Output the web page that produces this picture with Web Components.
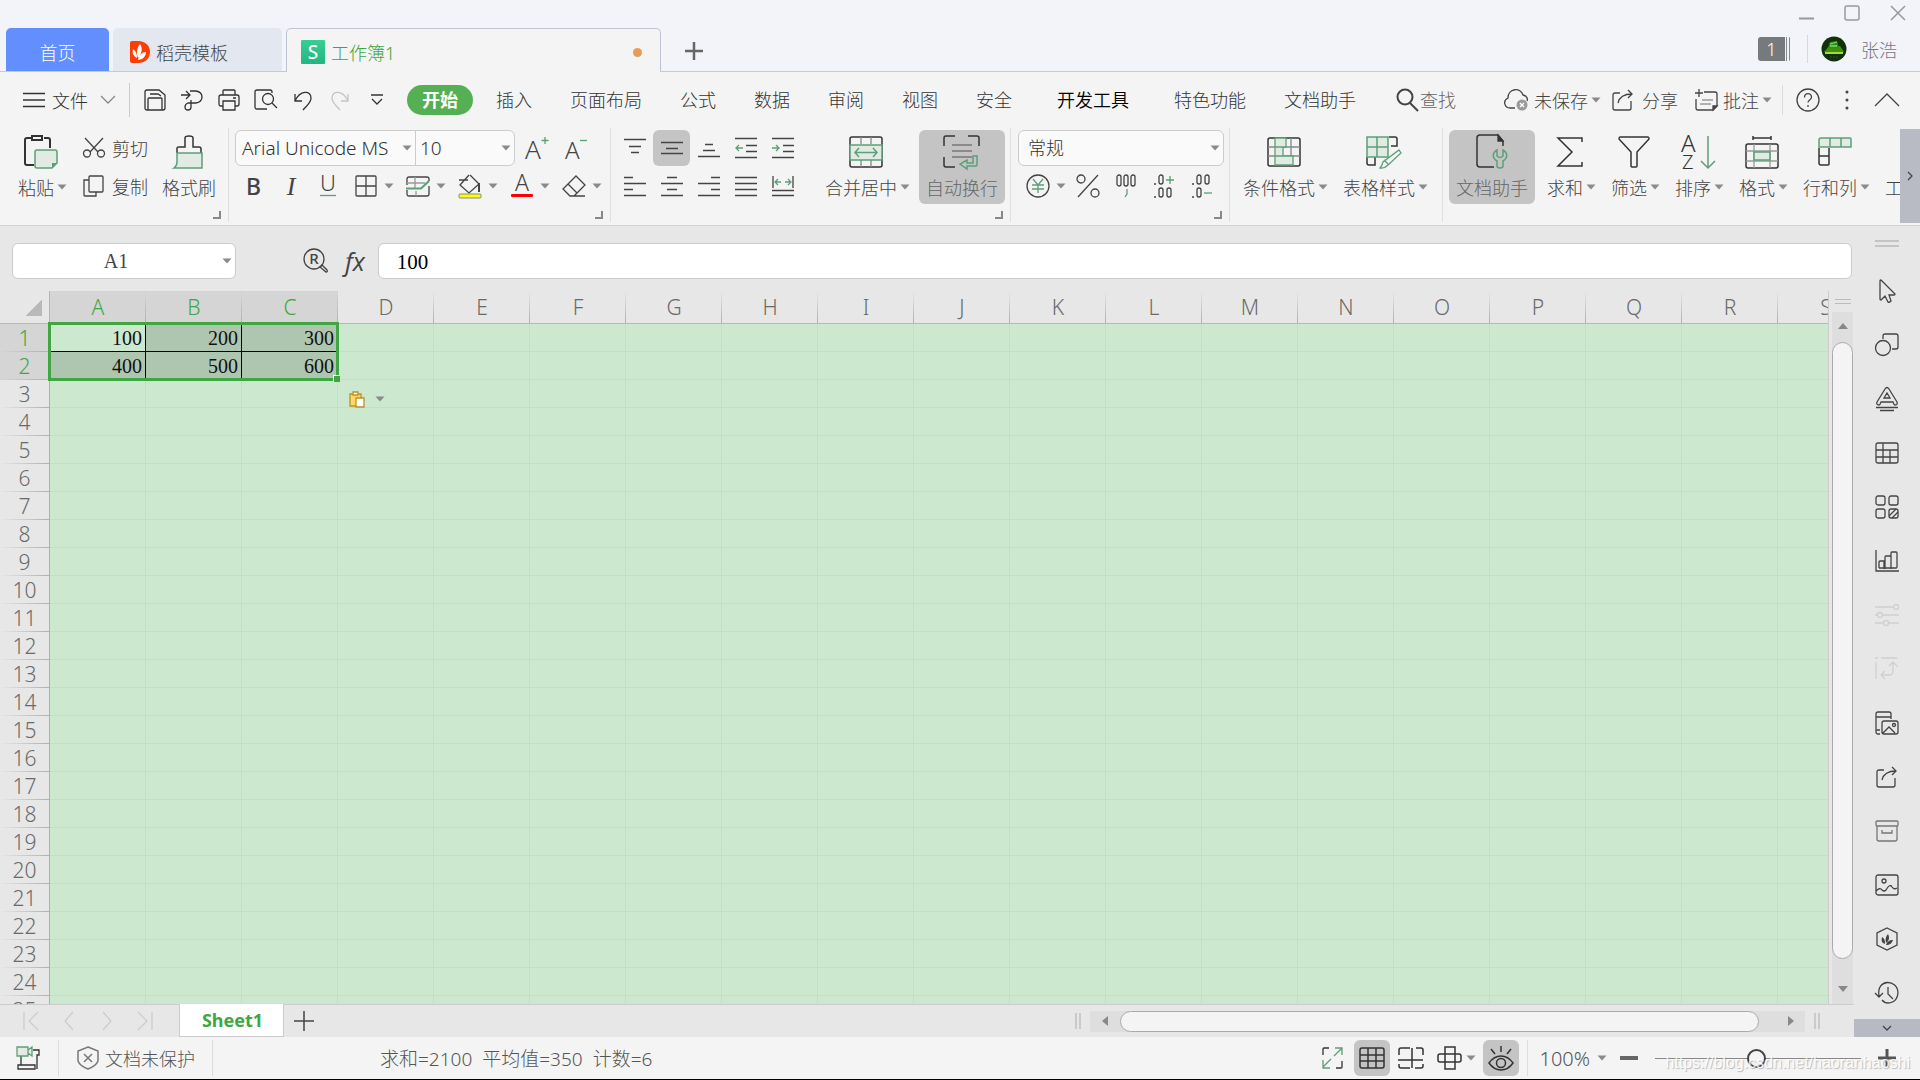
<!DOCTYPE html>
<html lang="zh-CN">
<head>
<meta charset="utf-8">
<title>工作簿1</title>
<style>
  html, body { margin: 0; height: 100%; }
  body {
    font-family: "Noto Sans", "Noto Sans CJK SC", sans-serif;
    font-size: 18px;
    font-weight: 300;
    color: #444;
    overflow: hidden;
    --green: #5d9f78;
    --accent: #3fa642;
    --pressed: #c4c4c4;
    --panel: #f4f4f4;
    --bar: #e7e7e7;
  }
</style>
</head>
<body>
<app-window></app-window>
<script>
const G = 'stroke="#5d9f78"';
const GF = 'stroke="#5d9f78" fill="#e1ebe4"';
const lines = d => `<path d="${d}"/>`;
const letter = (ch, x, y, size, extra = '') => `<text x="${x}" y="${y}" font-size="${size}" fill="currentColor" stroke="none" ${extra}>${ch}</text>`;

/* 图标: [宽, 高, 内容] */
const ICONS = {
  arrow: [16, 8, '<path d="M3.500 1.500h9l-4.500 5z" fill="#8a8a8a" stroke="none"/>'],
  min: [16, 16, '<path d="M1 13.500h15" stroke="#999" stroke-width="2"/>'],
  max: [16, 16, '<rect x="1" y="1" width="14" height="14" rx="2" stroke="#999" stroke-width="1.500"/>'],
  close: [16, 16, '<path d="M1 1l14 14M15 1L1 15" stroke="#999" stroke-width="1.500"/>'],
  plusTab: [18, 18, '<path d="M9 0v18M0 9h18" stroke="#666" stroke-width="2.500"/>'],
  flame: [20, 24, '<path d="M2 1h6c16 0 16 22 0 22H2q-2 0-2-2V3q0-2 2-2z" fill="#fe3d04" stroke="none"/><path d="M8 18C6 12 7 8 10 4c3 4 2 9-2 14zM7 18C3 16 2 13 3 9c3 2 4 5 4 9zM8 20c1-5 4-8 8-8 0 4-3 8-8 8z" fill="#fff" stroke="none"/>'],
  sheetLogo: [24, 24, '<defs><linearGradient id="g" x2="0" y2="1"><stop stop-color="#37cf96"/><stop offset="1" stop-color="#25b580"/></linearGradient></defs><rect width="24" height="24" rx="1" fill="url(#g)" stroke="none"/>' + letter('S', 12, 19, 19, 'style="fill:#fff" text-anchor="middle" font-weight="500"')],
  avatar: [26, 26, '<circle cx="13" cy="13" r="12.500" fill="#12300a" stroke="none"/><path d="M3 16h20l-4-6H8z" fill="#3f8f10" stroke="none"/><path d="M4 17h18" stroke="#9ee31c" stroke-width="2"/><path d="M9 6l7-1 2 7H7z" fill="#268c28" stroke="none"/><path d="M9 8l7-2M9 10h7" stroke="#7be04a"/><path d="M9 21h8" stroke="#243" stroke-dasharray="2 1"/>'],
  burger: [22, 16, lines('M0 1.500h22M0 8h22M0 14.500h22')],
  chevDown: [16, 10, '<path d="M1 1l7 7 7-7" stroke="#888"/>'],
  chevUp: [26, 14, lines('M1 13L13 1l12 12')],
  chevRight: [6, 10, lines('M1 1l4 4-4 4')],
  chevSmall: [10, 6, lines('M1 1l4 4 4-4')],
  save: [22, 22, lines('M3 1h12l6 5v13q0 2-2 2H3q-2 0-2-2V3q0-2 2-2zM4 21V10q0-1 1-1h12q1 0 1 1v11M6 5h8l3 2')],
  export: [22, 22, lines('M0 6h9M5 2l4 4-4 4M9 2h6q6 1 6 6t-6 6H9M10 11v7q0 3-3 3t-3-3 3-4h3')],
  print: [22, 22, lines('M5 6V2q0-1 1-1h10q1 0 1 1v4M5 17H3q-2 0-2-2V8q0-2 2-2h16q2 0 2 2v7q0 2-2 2h-2M5 12h12v9H5zM15 9h3')],
  preview: [24, 22, lines('M13 20H3q-2 0-2-2V3q0-2 2-2h13q2 0 2 2v1M18 14l5 5') + '<circle cx="14" cy="10" r="5.500"/>'],
  undo: [20, 20, lines('M2 4v7h7M2 11C7 0 18 0 18 8c0 5-4 7-8 12')],
  redo: [20, 20, '<path d="M18 4v7h-7M18 11C13 0 2 0 2 8c0 5 4 7 8 12" stroke="#c4c4c4"/>'],
  more: [12, 12, lines('M0 1h12M1 5l5 5 5-5')],
  search: [24, 24, '<circle cx="10" cy="9" r="7.500" stroke-width="2"/><path d="M15 15l8 8" stroke-width="2"/>'],
  cloud: [26, 22, lines('M12 19H7C2 19-1 12 5 9 5-1 18-2 20 6c4 1 5 4 4 6') + '<circle cx="19" cy="16" r="5.500" fill="#9a9a9a" stroke="none"/><path d="M17 14l4 4M21 14l-4 4" stroke="#fff"/>'],
  share: [22, 22, lines('M8 4H3Q1 4 1 6v13q0 2 2 2h14q2 0 2-2v-7M6 14Q8 5 20 5M16 1l4 4-4 4')],
  comment: [24, 22, lines('M10 3h11q2 0 2 2v12l-4 4H4q-2 0-2-2v-9M1 4h8M5 0v8') + '<path d="M8 11h11M6 15h11" stroke="#999"/><path d="M19 21l4-4h-4z" fill="#444"/>'],
  help: [24, 24, '<circle cx="12" cy="12" r="11"/><path d="M8.500 9.500c0-5 7-5 7-.5 0 3-3.500 3-3.500 5.500M12 17v2"/>'],
  dots: [4, 20, '<g fill="#444" stroke="none"><circle cx="2" cy="2" r="1.500"/><circle cx="2" cy="10" r="1.500"/><circle cx="2" cy="18" r="1.500"/></g>'],
  paste: [34, 34, '<path d="M8 3H3Q1 3 1 5v23q0 2 2 2h7M20 3h4q2 0 2 2v8M8 1h10v4H8z" stroke="#333" stroke-width="2"/><path d="M13 15h18q2 0 2 2v11l-5 5H13q-2 0-2-2V17q0-2 2-2z" stroke-width="1.500" ' + GF + '/><path d="M28 33l5-5h-5z" fill="#5d9f78" stroke="none"/>'],
  cut: [22, 20, lines('M2 0l13 14M20 0L7 14') + '<circle cx="4" cy="15.500" r="3.500"/><circle cx="18" cy="15.500" r="3.500"/>'],
  copy: [22, 22, lines('M7 1h12q1 0 1 1v14q0 1-1 1H7q-1 0-1-1V2q0-1 1-1zM6 5H1v15q0 1 1 1h11v-4')],
  brush: [32, 34, '<path d="M4 18v-5q0-1 2-1h6V3q0-2 4-2t4 2v9h6q2 0 2 2v4" stroke-width="1.500"/><path d="M4 18h25v15H1q3-2 3-6z" stroke-width="1.500" ' + GF + '/>'],
  fontUp: [24, 24, letter('A', 0, 23, 26) + '<path d="M20 1v7M16.500 4.500h7" ' + G + '/>'],
  fontDown: [24, 24, letter('A', 2, 23, 24) + '<path d="M17 4.500h7" ' + G + '/>'],
  italic: [22, 22, letter('I', 11, 20, 26, 'font-family="Liberation Serif, serif" font-style="italic" text-anchor="middle"')],
  under: [22, 22, letter('U', 11, 16, 22, 'text-anchor="middle"') + '<path d="M3 20.500h16" ' + G + '/>'],
  borders: [22, 22, lines('M2 1h18q1 0 1 1v18q0 1-1 1H2q-1 0-1-1V2q0-1 1-1zM11 1v20M1 11h20')],
  cellStyle: [24, 22, lines('M23 11v8q0 2-2 2H3q-2 0-2-2v-4M1 10V4q0-2 2-2h18q2 0 2 2v2') + '<path d="M1 8h18M9 2v11M10 16v5" stroke="#999"/><path d="M0 13.500h15L23 6" stroke-width="2" ' + G + '/>'],
  fill: [24, 24, lines('M1 6h9M11 1L2 11l9 8 10-9L12 1') + '<path d="M21 9v9" stroke-width="2"/><rect x="1" y="20" width="22" height="4" rx="1" fill="#ff0" stroke="#888" stroke-width="1"/>'],
  fontColor: [22, 24, letter('A', 11, 17, 23, 'text-anchor="middle"') + '<rect x="0" y="20" width="22" height="3" rx="1" fill="#f00" stroke="none"/>'],
  eraser: [24, 24, lines('M14 2l9 9-11 11H8l-7-7zM6 10l9 9M8 22h15')],
  alTop: [22, 22, lines('M0 2.500h22M5 9.500h12M7 15.500h8')],
  alMid: [22, 22, lines('M0 5.500h22M5 11.500h12M0 16.500h22')],
  alBot: [22, 22, lines('M7 7.500h8M5 13.500h12M0 19.500h22')],
  outdent: [22, 22, lines('M0 1.500h22M11 8.500h11M11 14.500h11M0 20.500h22') + '<path d="M8 11H1M4 8l-3 3 3 3" ' + G + '/>'],
  indent: [22, 22, lines('M0 1.500h22M11 8.500h11M11 14.500h11M0 20.500h22') + '<path d="M0 11h7M4 8l3 3-3 3" ' + G + '/>'],
  left: [22, 22, lines('M0 2.500h9M0 8.500h22M0 14.500h9M0 20.500h22')],
  center: [22, 22, lines('M6 2.500h10M0 8.500h22M6 14.500h10M0 20.500h22')],
  right: [22, 22, lines('M13 2.500h9M0 8.500h22M13 14.500h9M0 20.500h22')],
  justify: [22, 22, lines('M0 2.500h22M0 8.500h22M0 14.500h22M0 20.500h22')],
  spread: [22, 22, lines('M1 1v12M21 1v12M0 15.500h22M0 20.500h22') + '<path d="M9 7H3M6 4L3 7l3 3M13 7h6M16 4l3 3-3 3" ' + G + '/>'],
  merge: [34, 32, '<rect x="1" y="1" width="32" height="30" rx="2" stroke-width="1.500"/><path d="M12 1v7M22 1v7M12 24v7M22 24v7" stroke="#888"/><path d="M1 9h32v15H1z" stroke-width="1.500" ' + GF + '/><path d="M6 16.500h22M10 12l-4 4.500 4 4.500M24 12l4 4.500-4 4.500" stroke-width="1.500" ' + G + '/>'],
  wrap: [38, 34, '<path d="M12 1H3Q1 1 1 3v8M25 1h9q2 0 2 2v8M1 22v8q0 2 2 2h9" stroke-width="1.500"/><path d="M9 10h20M9 16h20M9 22h20" stroke="#777" stroke-width="1.500"/><path d="M34 21v9q0 1-1 1H24v3l-7-5 7-4v3h6v-7z" stroke-width="1.500" ' + G + '/>'],
  yen: [24, 24, '<circle cx="12" cy="12" r="11"/><path d="M7 5l5 6 5-6M12 11v8M6 11h12M6 15h12" ' + G + '/>'],
  percent: [24, 24, '<circle cx="5" cy="5" r="4"/><circle cx="19" cy="19" r="4"/><path d="M22 1L2 23"/>'],
  thousands: [22, 24, '<g><rect x="2" y="1" width="4" height="11" rx="2"/><rect x="9" y="1" width="4" height="11" rx="2"/><rect x="16" y="1" width="4" height="11" rx="2"/></g><path d="M12 15v5l-2 3" ' + G + '/>'],
  decMore: [22, 24, '<rect x="6" y="1" width="4" height="9" rx="2"/><rect x="6" y="14" width="4" height="9" rx="2"/><rect x="14" y="14" width="4" height="9" rx="2"/><path d="M1 10h2M1 23h2"/><path d="M13 6h8M17 2v8" ' + G + '/>'],
  decLess: [22, 24, '<rect x="6" y="1" width="4" height="9" rx="2"/><rect x="14" y="1" width="4" height="9" rx="2"/><rect x="6" y="14" width="4" height="9" rx="2"/><path d="M1 10h2M1 23h2"/><path d="M13 19h8" ' + G + '/>'],
  condFormat: [34, 30, '<rect x="1" y="1" width="32" height="28" rx="2" stroke-width="1.500"/><path d="M1 10h32M1 19h32M24 1v28" stroke="#888"/><path d="M8 1h11v9H8zM8 10h8v9H8zM8 19h18v9H8z" ' + GF + '/>'],
  tableStyle: [38, 34, '<path d="M24 2h6q2 0 2 2v7h-6M2 22v6q0 2 2 2h6v-8" stroke-width="1.500"/><path d="M2 2h21v20H2zM12 2v20M2 12h21" stroke-width="1.500" ' + GF + '/><path d="M34 15l2 3-13 12q-4 4-8 3 2-2 3-6zM19 25l4 4" fill="#f4f4f4" ' + G + '/>'],
  docHelper: [32, 36, '<path d="M18 33H4q-3 0-3-3V4q0-3 3-3h18l5 6v5" stroke-width="1.500"/><path d="M22 1v6h5z" fill="#333"/><path d="M21 16c-5 3-5 8 0 11v5q0 2 3 2t3-2v-5c5-3 5-8 0-11v6q-3 3-6 0z" stroke-width="1.500" ' + G + '/>'],
  sum: [28, 32, '<path d="M26 6V2H2l14 14L2 30h24v-4" stroke-width="1.500"/>'],
  filter: [34, 34, '<path d="M3 2h28q1 0 1 2L20 17v14q0 1-1 1h-4q-1 0-1-1V17L2 4q0-2 1-2z" stroke-width="1.500"/>'],
  sort: [36, 36, letter('A', 1, 18, 24) + letter('Z', 2, 35, 20) + '<path d="M28 2v32M21 27l7 7 7-7" stroke-width="1.500" ' + G + '/>'],
  format: [34, 34, '<rect x="1" y="9" width="32" height="24" rx="2" stroke-width="1.500"/><path d="M8 3h18M8 1v4M26 1v4" stroke-width="1.500"/><path d="M9 9v24M25 9v24M1 16h32M1 26h32" stroke="#999"/><path d="M9 17h16v8H9z" stroke-width="1.500" ' + GF + '/>'],
  rowCol: [34, 32, '<path d="M1 12v15q0 2 2 2h7q1 0 1-1V12M1 20h10" stroke-width="1.500"/><path d="M3 2h29q1 0 1 1v8H1V4q0-2 2-2zM12 2v9M23 2v9" stroke-width="1.500" ' + GF + '/>'],
  corner: [8, 8, '<path d="M7 0v7H0" stroke="#888" stroke-width="2"/>'],
  nameSearch: [26, 26, '<circle cx="11" cy="11" r="10"/>' + letter('R', 11, 16, 15, 'text-anchor="middle" font-weight="500"') + '<path d="M17 19l2-2 5 5q1 2-1 2z"/>'],
  pasteOpt: [16, 16, '<path d="M1 3h11v12H1z" fill="#ffd964" stroke="#b8912e"/><path d="M4 1h5v3H4z" fill="#fff" stroke="#b8912e"/><path d="M7 7h8v9H7z" fill="#fff" stroke="#b8912e"/>'],
  grip: [24, 8, '<path d="M0 1h24M0 6h24" stroke="#c4c4c4" stroke-width="2"/>'],
  gripV: [6, 16, '<path d="M1 0v16M5 0v16" stroke="#bbb"/>'],
  triUp: [10, 6, '<path d="M5 0l5 6H0z" fill="#888" stroke="none"/>'],
  triDown: [10, 6, '<path d="M5 6l5-6H0z" fill="#888" stroke="none"/>'],
  triLeft: [6, 10, '<path d="M0 5l6-5v10z" fill="#888" stroke="none"/>'],
  triRight: [6, 10, '<path d="M6 5L0 0v10z" fill="#888" stroke="none"/>'],
  pointer: [24, 24, lines('M5 2q0-2 2 0l13 13q0 1-1 1h-5l2 6q-2 2-3 1l-3-6-4 4q-1 0-1-1z')],
  shapes: [24, 24, lines('M8 6V3q0-2 2-2h11q2 0 2 2v11q0 2-2 2h-4') + '<circle cx="8" cy="15" r="7.500"/>'],
  artText: [24, 24, lines('M2 15L10 2q2-3 4 0l8 13q1 3-2 3-1 0-2-3H6q-1 3-2 3-3 0-2-3zM9 11l3-5 3 5zM1 20.500h22M5 23.500h14')],
  tableSide: [24, 22, lines('M3 1h18q2 0 2 2v16q0 2-2 2H3q-2 0-2-2V3q0-2 2-2zM8 1v20M1 8h22M1 15h22M15 8v13')],
  widgets: [24, 24, '<rect x="1" y="1" width="9" height="9" rx="2"/><rect x="14" y="1" width="9" height="9" rx="2"/><rect x="1" y="14" width="9" height="9" rx="2"/><rect x="14" y="14" width="9" height="9" rx="2"/><path d="M14 21l7-7M17 23l6-6"/>'],
  chart: [24, 24, lines('M1 1v21h23M4 19v-6q0-1 1-1h4v8M10 20V8q0-1 1-1h5v13M16 20V4q0-1 1-1h4q1 0 1 1v14q0 1-1 1H4')],
  sliders: [24, 24, lines('M0 4h18M0 12h2M8 12h16M0 20h8M14 20h10') + '<circle cx="21" cy="4" r="2.500"/><circle cx="5" cy="12" r="2.500"/><circle cx="11" cy="20" r="2.500"/>'],
  swap: [24, 24, lines('M0 1h3M6 1h16M1 5v17M6 18h8q4 0 4-4V6M10 14l-4 4 4 4M14 9l4-4 5 5')],
  gallery: [24, 24, lines('M5 23H3q-2 0-2-2V3q0-2 2-2h11q2 0 2 2v5M1 6h15M1 19h4M9 10h12q2 0 2 2v9q0 2-2 2H9q-2 0-2-2v-9q0-2 2-2zM8 22l6-6 6 6') + '<circle cx="19" cy="14" r="1.500"/>'],
  archive: [24, 22, '<g stroke="#777"><rect x="1" y="1" width="22" height="5" rx="1"/><path d="M2 6v13q0 2 2 2h16q2 0 2-2V6M7 10v3h10v-3"/></g>'],
  picture: [24, 22, '<rect x="1" y="1" width="22" height="20" rx="2"/><circle cx="9" cy="7" r="2"/><path d="M1 17q4-4 6-1 2 2 4 0 4-7 6-3 2 3 5 1"/>'],
  docer: [24, 24, '<path d="M12 1l10 5v12l-10 5-10-5V6z"/><path d="M11 16c-1-4 0-7 2-9 2 4 1 7-2 9zM10 17c-3-1-4-3-3-7 3 2 3 4 3 7zM11 18c1-3 3-5 7-5-1 3-3 5-7 5z" fill="#444" stroke="none"/>'],
  history: [24, 22, lines('M4 14C1-4 23-3 23 11 22 22 11 23 7 18M0 11l4 4 4-4M13 5v7l5 5')],
  first: [18, 18, lines('M2 0v18M16 0L7 9l9 9')],
  prev: [12, 18, lines('M10 0L2 9l8 9')],
  next: [12, 18, lines('M2 0l8 9-8 9')],
  last: [18, 18, lines('M2 0l9 9-9 9M16 0v18')],
  plus: [20, 20, '<path d="M10 0v20M0 10h20" stroke="#444" stroke-width="1.500"/>'],
  macro: [24, 24, '<path d="M5 10v9M17 4h6v5h-2v14M2 19h17v4H2z"/><path d="M1 1h11v9H1zM12 4l4-3v9l-4-3" ' + GF + '/>'],
  shield: [24, 24, '<path d="M12 1l10 4v10q-2 5-10 8-8-3-10-8V5zM8 8l8 8M16 8l-8 8" stroke="#777" stroke-width="1.500"/>'],
  expand: [22, 22, '<path d="M1 8V2q0-1 1-1h5M20 14v6q0 1-1 1h-5"/><path d="M12 9l8-8M13 1h7v7M9 12l-8 8M1 13v8h7" ' + G + '/>'],
  gridView: [26, 22, '<g stroke-width="1.500"><rect x="1" y="1" width="24" height="20" rx="2"/><path d="M9 1v20M17 1v20M1 8h24M1 14h24"/></g>'],
  pageView: [26, 22, '<path d="M1 8V3q0-2 2-2h9M14 1v20M18 1h5q2 0 2 2v5M0 13h25M1 17v2q0 2 2 2h9M17 21h6q2 0 2-2v-2" stroke-width="1.500"/>'],
  breakView: [26, 24, '<path d="M8 1h10v22H8zM8 8H3q-2 0-2 2v4q0 2 2 2h5M18 8h4q2 0 2 2v4q0 2-2 2h-4M8 8h10M8 16h10" stroke-width="1.500"/>'],
  eye: [24, 26, '<g stroke-width="1.500"><path d="M0 18q5-7 12-7t12 7q-5 7-12 7T0 18zM12 1v6M2 4l4 5M22 4l-4 5"/><circle cx="12" cy="18" r="4.500"/></g>'],
  minus: [18, 4, '<path d="M0 2h18" stroke="#666" stroke-width="4"/>'],
  plusThick: [18, 18, '<path d="M9 0v18M0 9h18" stroke="#555" stroke-width="3"/>']
};

const RESET = `
  *, *::before { box-sizing: border-box; }
  button { display: flex; align-items: center; justify-content: center; flex: none; margin: 0; padding: 0; border: 0; background: none; font: inherit; color: inherit; white-space: nowrap; }
  input, select { min-width: 0; margin: 0; padding: 0; border: 0; background: none; font: inherit; color: inherit; appearance: none; outline: none; }
  a { color: inherit; text-decoration: none; }
`;

function component(tag, css, html) {
  customElements.define(tag, class extends HTMLElement {
    constructor() {
      super();
      this.attachShadow({ mode: 'open' });
      this.shadowRoot.innerHTML = `<style>${RESET}${css}</style>${typeof html === 'function' ? html(this) : html}`;
    }
  });
}

class UiIcon extends HTMLElement {
  constructor() {
    super();
    this.attachShadow({ mode: 'open' });
  }
  connectedCallback() {
    const [w, h, body] = ICONS[this.getAttribute('name')];
    this.shadowRoot.innerHTML = `
      <style>:host { display: block; flex: none; } svg { display: block; overflow: visible; }</style>
      <svg width="${w}" height="${h}" viewBox="0 0 ${w} ${h}" fill="none" stroke="currentColor" stroke-width="1.300" aria-hidden="true">${body}</svg>`;
  }
}
customElements.define('ui-icon', UiIcon);

/* 大按钮: 图标在上, 文字在下 */
class BigButton extends HTMLElement {
  constructor() {
    super();
    this.attachShadow({ mode: 'open' });
  }
  connectedCallback() {
    const drop = this.hasAttribute('drop');
    const icon = this.getAttribute('icon');
    this.shadowRoot.innerHTML = `
      <style>${RESET}
      :host { display: block; flex: none; }
      button { flex-direction: column; justify-content: flex-start; height: 74px; padding: 0 7px; border-radius: 6px; }
      :host([drop]) button { padding: 0 6px; }
      :host([drop]) .pic { margin-right: 6px; }
      :host([pressed]) button { background: var(--pressed); color: #666; }
      .pic { display: flex; align-items: center; justify-content: center; height: 44px; color: #333; }
      .label { display: flex; align-items: center; height: 28px; line-height: 28px; }
      .label ui-icon { margin-top: -3px; }
      </style>
      <button type="button"><span class="pic">${icon ? `<ui-icon name="${icon}"></ui-icon>` : ''}</span>
      <span class="label"><slot></slot>${drop ? '<ui-icon name="arrow"></ui-icon>' : ''}</span></button>`;
  }
}
customElements.define('big-button', BigButton);

/* 小图标按钮 */
class IconButton extends HTMLElement {
  constructor() {
    super();
    this.attachShadow({ mode: 'open' });
  }
  connectedCallback() {
    const icon = this.getAttribute('icon');
    this.shadowRoot.innerHTML = `
      <style>${RESET}
      :host { display: flex; flex: none; width: 37px; height: 36px; }
      :host([wide]) { width: 38px; }
      :host([drop]) { width: 43px; }
      button { width: 100%; border-radius: 6px; }
      :host([pressed]) button { background: var(--pressed); }
      .pic { display: flex; justify-content: center; }
      :host([drop]) .pic { width: 24px; margin-right: 3px; }
      b { font-size: 23px; font-weight: 500; }
      </style>
      <button type="button" aria-label="${this.getAttribute('label') || icon}">
      <span class="pic">${icon ? `<ui-icon name="${icon}"></ui-icon>` : '<b><slot></slot></b>'}</span>${this.hasAttribute('drop') ? '<ui-icon name="arrow"></ui-icon>' : ''}</button>`;
  }
}
customElements.define('icon-button', IconButton);

component('title-bar', `
  :host { display: flex; justify-content: space-between; height: 72px; flex: none; background: #f2f4f9; border-bottom: 1px solid #c3cad8; }
  .tabs { display: flex; align-items: flex-end; gap: 4px; padding-left: 6px; margin-bottom: -1px; }
  .tab { height: 44px; border-radius: 5px 5px 0 0; padding: 4px 0 0; }
  .home { width: 103px; background: #628ffd; color: #fff; }
  .docer { width: 169px; justify-content: flex-start; gap: 6px; padding-left: 17px; background: #e3e7f0; }
  .book { width: 375px; justify-content: flex-start; gap: 6px; padding: 3px 18px 0 14px; background: var(--panel); border: 1px solid #bfc4d4; border-bottom: 0; color: var(--accent); }
  .home, .docer { margin-bottom: 1px; height: 43px; }
  .dot { width: 9px; height: 9px; margin-left: auto; border-radius: 50%; background: #e69d5a; }
  .add { width: 58px; height: 43px; }
  .right { display: flex; flex-direction: column; }
  .win { display: flex; justify-content: flex-end; margin-right: -1px; }
  .win button { width: 46px; height: 26px; }
  .user { display: flex; align-items: center; justify-content: flex-end; height: 45px; padding-right: 23px; color: #777; }
  .count { height: 24px; width: 33px; padding-right: 6px; color: #fff; background: linear-gradient(90deg, #777a7d 27px, transparent 27px 28px, #888 28px 29px, transparent 29px 31px, #888 31px 32px, transparent 32px); border-radius: 3px; }
  .user i { width: 1px; height: 28px; margin: 0 13px 0 16px; background: #d8d8dc; }
  .name { gap: 14px; }
`, `
  <div class="tabs">
    <button class="tab home">首页</button>
    <button class="tab docer"><ui-icon name="flame"></ui-icon>稻壳模板</button>
    <button class="tab book"><ui-icon name="sheetLogo"></ui-icon>工作簿1<span class="dot"></span></button>
    <button class="add" aria-label="新建"><ui-icon name="plusTab"></ui-icon></button>
  </div>
  <div class="right">
    <div class="win">
      <button aria-label="最小化"><ui-icon name="min"></ui-icon></button>
      <button aria-label="最大化"><ui-icon name="max"></ui-icon></button>
      <button aria-label="关闭"><ui-icon name="close"></ui-icon></button>
    </div>
    <div class="user"><button class="count">1</button><i></i><button class="name"><ui-icon name="avatar"></ui-icon>张浩</button></div>
  </div>
`);

component('menu-bar', `
  :host { display: flex; align-items: center; height: 56px; flex: none; background: var(--panel); color: #333; }
  .file { gap: 7px; padding-left: 23px; }
  .file ui-icon:last-child { margin-left: 5px; }
  .line { width: 1px; height: 34px; background: #ccc; margin: 0 6px 0 13px; }
  nav { display: flex; margin-left: 8px; }
  nav a { padding: 0 19px; height: 30px; line-height: 30px; white-space: nowrap; }
  nav a.on { padding: 0 15px; margin: 0 4px; border-radius: 15px; background: #55b054; color: #fff; font-weight: 700; }
  nav a.dev { padding: 0 26px; color: #000; font-weight: 350; }
  .find { display: flex; align-items: center; margin-left: 20px; gap: 1px; color: #444; }
  .find input { width: 60px; }
  .find input::placeholder { color: #666; opacity: 1; }
  .tools { display: flex; align-items: center; margin-left: auto; color: #444; padding-right: 20px; }
  .tools button { gap: 6px; }
  .tools .share { margin: 0 16px 0 8px; gap: 8px; }
  .tools .drop { gap: 0; }
  .tools .drop span { margin-left: 5px; }
  .tools .line { height: 30px; margin: 0 13px 0 7px; background: #ddd; }
  .tools .dots { margin: 0 25px; }
`, `
  <button class="file"><ui-icon name="burger"></ui-icon>文件<ui-icon name="chevDown"></ui-icon></button>
  <span class="line"></span>
  ${['save', 'export', 'print', 'preview', 'undo', 'redo', 'more'].map(n => `<icon-button icon="${n}"></icon-button>`).join('')}
  <nav>
    <a href="#" class="on">开始</a><a href="#">插入</a><a href="#">页面布局</a><a href="#">公式</a><a href="#">数据</a><a href="#">审阅</a><a href="#">视图</a><a href="#">安全</a><a href="#" class="dev">开发工具</a><a href="#">特色功能</a><a href="#">文档助手</a>
  </nav>
  <label class="find"><ui-icon name="search"></ui-icon><input placeholder="查找" aria-label="查找"></label>
  <div class="tools">
    <button class="drop"><ui-icon name="cloud"></ui-icon><span>未保存</span><ui-icon name="arrow"></ui-icon></button>
    <button class="share"><ui-icon name="share"></ui-icon>分享</button>
    <button class="drop"><ui-icon name="comment"></ui-icon><span>批注</span><ui-icon name="arrow"></ui-icon></button>
    <span class="line"></span>
    <button aria-label="帮助"><ui-icon name="help"></ui-icon></button>
    <button class="dots" aria-label="更多"><ui-icon name="dots"></ui-icon></button>
    <button aria-label="收起"><ui-icon name="chevUp"></ui-icon></button>
  </div>
`);

component('ribbon-group', `
  :host { display: flex; position: relative; flex: none; height: 94px; padding: 2px 5px 0; border-right: 1px solid #dedede; }
  :host([last]) { border: 0; padding-left: 6px; }
  .corner { position: absolute; right: 7px; bottom: 3px; }
`, el => `<slot></slot><button class="corner" aria-label="更多选项"><slot name="corner"></slot></button>`);

const CORNER = '<ui-icon slot="corner" name="corner"></ui-icon>';

component('ribbon-bar', `
  :host { display: flex; height: 98px; flex: none; background: var(--panel); border-bottom: 1px solid #d2d2d2; }
  .groups { display: flex; flex: 1; min-width: 0; overflow: hidden; }
  .col { display: flex; flex-direction: column; gap: 2px; }
  .row { display: flex; align-items: center; height: 36px; }
  .clip { padding: 0 7px; }
  .clip button { gap: 7px; height: 36px; }
  .fonts { padding-left: 8px; gap: 9px; }
  .combo { display: flex; align-items: center; height: 36px; border: 1px solid #ccc; border-radius: 6px; background: #fafafa; color: #333; }
  .combo select { flex: 1; height: 100%; padding-left: 6px; }
  .font, .size { display: flex; align-items: center; height: 100%; font-size: 19px; font-weight: 350; }
  .font { flex: none; width: 180px; border-right: 1px solid #ccc; }
  .size { flex: 1; }
  .size select { padding-left: 4px; }
  .merge { margin-left: 18px; }
  .num { padding-left: 8px; }
  .gap { margin-right: 6px; }
  .scroll { width: 20px; height: 94px; margin-top: 1px; background: #b8bbc3; }
`, `
  <div class="groups">
    <ribbon-group style="padding-left: 12px">
      <big-button icon="paste" drop>粘贴</big-button>
      <div class="col clip"><button><ui-icon name="cut"></ui-icon>剪切</button><button><ui-icon name="copy"></ui-icon>复制</button></div>
      <big-button icon="brush">格式刷</big-button>${CORNER}
    </ribbon-group>
    <ribbon-group style="padding-left: 6px">
      <div class="col">
        <div class="row">
          <div class="combo" style="width: 280px">
            <span class="font"><select aria-label="字体"><option>Arial Unicode MS</option></select><ui-icon name="arrow"></ui-icon></span>
            <span class="size"><select aria-label="字号"><option>10</option></select><ui-icon name="arrow"></ui-icon></span>
          </div>
          <icon-button wide icon="fontUp" style="margin-left: 3px"></icon-button><icon-button wide icon="fontDown"></icon-button>
        </div>
        <div class="row">
          <icon-button label="加粗">B</icon-button><icon-button icon="italic"></icon-button><icon-button icon="under"></icon-button>
          <div class="row fonts">
            ${['borders', 'cellStyle', 'fill', 'fontColor', 'eraser'].map(n => `<icon-button drop icon="${n}"></icon-button>`).join('')}
          </div>
        </div>
      </div>${CORNER}
    </ribbon-group>
    <ribbon-group>
      <div class="col">
        <div class="row"><icon-button icon="alTop"></icon-button><icon-button pressed icon="alMid"></icon-button><icon-button icon="alBot"></icon-button><icon-button icon="outdent"></icon-button><icon-button icon="indent"></icon-button></div>
        <div class="row">${['left', 'center', 'right', 'justify', 'spread'].map(n => `<icon-button icon="${n}"></icon-button>`).join('')}</div>
      </div>
      <big-button class="merge" icon="merge" drop>合并居中</big-button>
      <big-button icon="wrap" pressed>自动换行</big-button>${CORNER}
    </ribbon-group>
    <ribbon-group style="padding-left: 7px">
      <div class="col">
        <div class="combo" style="width: 206px"><select aria-label="数字格式" style="padding-left: 9px"><option>常规</option></select><ui-icon name="arrow"></ui-icon></div>
        <div class="row num"><icon-button drop icon="yen"></icon-button>${['percent', 'thousands', 'decMore', 'decLess'].map(n => `<icon-button wide icon="${n}"></icon-button>`).join('')}</div>
      </div>${CORNER}
    </ribbon-group>
    <ribbon-group style="padding-left: 7px">
      <big-button icon="condFormat" drop>条件格式</big-button>
      <big-button icon="tableStyle" drop>表格样式</big-button>
    </ribbon-group>
    <ribbon-group last>
      <big-button class="gap" icon="docHelper" pressed>文档助手</big-button>
      <big-button icon="sum" drop>求和</big-button>
      <big-button icon="filter" drop>筛选</big-button>
      <big-button icon="sort" drop>排序</big-button>
      <big-button icon="format" drop>格式</big-button>
      <big-button icon="rowCol" drop>行和列</big-button>
      <big-button drop>工作表</big-button>
    </ribbon-group>
  </div>
  <button class="scroll" aria-label="向右滚动"><ui-icon name="chevRight"></ui-icon></button>
`);

component('formula-bar', `
  :host { display: flex; align-items: center; height: 65px; flex: none; padding: 5px 2px 0 12px; }
  .box { display: flex; align-items: center; height: 36px; background: #fff; border: 1px solid #ccc; border-radius: 6px; font-family: "Liberation Serif", serif; font-weight: 400; }
  .name { width: 224px; }
  .name input { flex: 1; text-align: center; font-size: 20px; }
  .tools { display: flex; align-items: center; gap: 16px; margin: 0 13px 0 67px; }
  .fx { font-family: "Open Sans", sans-serif; font-size: 25px; font-style: italic; font-weight: 400; line-height: 30px; }
  .value { flex: 1; color: #000; }
  .value input { flex: 1; padding: 2px 0 0 18px; font-size: 21px; }
`, `
  <div class="box name"><input value="A1" aria-label="名称框"><ui-icon name="arrow"></ui-icon></div>
  <div class="tools"><button aria-label="定位"><ui-icon name="nameSearch"></ui-icon></button><button class="fx">fx</button></div>
  <div class="box value"><input value="100" aria-label="编辑栏"></div>
`);

const VALUES = [[100, 200, 300], [400, 500, 600]];
const COLUMNS = 'ABCDEFGHIJKLMNOPQRS'.split('');

function sheetTable() {
  const head = COLUMNS.map((c, i) => `<th scope="col" class="${i < 3 ? 'sel' : ''}">${c}</th>`).join('');
  let rows = '';
  for (let r = 0; r < 25; r++) {
    const cells = COLUMNS.map((c, i) => {
      const v = VALUES[r] && VALUES[r][i];
      if (!v) return '<td></td>';
      return `<td class="data ${r || i ? 'gray' : ''}">${v}</td>`;
    }).join('');
    rows += `<tr><th scope="row" class="${r < 2 ? 'sel' : ''}">${r + 1}</th>${cells}</tr>`;
  }
  return `<table><colgroup><col class="rh">${COLUMNS.map(() => '<col>').join('')}</colgroup><thead><tr><td class="all"></td>${head}</tr></thead><tbody>${rows}</tbody></table>`;
}

component('sheet-grid', `
  :host { display: block; position: relative; flex: 1; min-width: 0; overflow: hidden; border-right: 1px solid #ccc; }
  table { width: 1874px; table-layout: fixed; border-collapse: separate; border-spacing: 0; }
  col { width: 96px; }
  col.rh { width: 50px; }
  th, td { padding: 0; overflow: hidden; }
  th { font-size: 21px; font-weight: 350; color: #6a6a6a; }
  thead th, .all { height: 33px; line-height: 32px; border-bottom: 1px solid #b5b8b5; }
  thead th { background: linear-gradient(transparent, #b0b0b0) right / 1px 100% no-repeat; }
  .all { border-right: 1px solid #b5b5b5; background: linear-gradient(135deg, transparent 50%, #b9b9b9 50%) 26px 9px / 16px 16px no-repeat; }
  tbody th { height: 28px; line-height: 27px; border-right: 1px solid #b0b0b0; background: linear-gradient(90deg, transparent, #b0b0b0) bottom / 100% 1px no-repeat; }
  th.sel { background-color: #d5d5d5; color: var(--accent); }
  tbody td { background: #cce8cf; border-right: 1px solid #d2d5d2; border-bottom: 1px solid #d2d5d2; }
  td.data { padding: 2px 3px 0 0; text-align: right; font: 400 20px/25px "Liberation Serif", serif; color: #111; border-color: #000; }
  td.gray { background: #aec6b0; }
  .range { position: absolute; left: 48px; top: 31px; width: 291px; height: 59px; border: 3px solid var(--accent); }
  .handle { position: absolute; right: -4px; bottom: -4px; width: 7px; height: 7px; background: var(--accent); border: solid #fff; border-width: 1px 0 0 1px; }
  .opts { position: absolute; left: 349px; top: 100px; gap: 7px; }
`, `
  ${sheetTable()}
  <div class="range"><span class="handle"></span></div>
  <button class="opts" aria-label="粘贴选项"><ui-icon name="pasteOpt"></ui-icon><ui-icon name="arrow"></ui-icon></button>
`);

component('scroll-v', `
  :host { display: flex; flex-direction: column; align-items: flex-start; flex: none; width: 25px; padding: 8px 0 0 3px; }
  .split { width: 16px; height: 13px; margin-left: 3px; border-top: 1px solid #bbb; }
  .split::before { content: ""; display: block; width: 16px; height: 4px; border-bottom: 1px solid #bbb; }
  .track { display: flex; flex-direction: column; flex: 1; width: 21px; background: #dedede; }
  .track button { height: 30px; padding-bottom: 3px; }
  .thumb { flex: 1; background: #f4f4f4; border: 1px solid #aaa; border-radius: 11px; }
  .track button:last-child { height: 45px; padding: 15px 0 0; }
`, `
  <div class="split"></div>
  <div class="track"><button aria-label="向上"><ui-icon name="triUp"></ui-icon></button><div class="thumb"></div><button aria-label="向下"><ui-icon name="triDown"></ui-icon></button></div>
`);

component('sheet-tabs', `
  :host { display: flex; align-items: center; height: 33px; flex: none; border-top: 1px solid #ccc; }
  .nav { display: flex; padding-left: 12px; color: #ccc; }
  .nav button { width: 38px; height: 32px; }
  .tab { width: 105px; height: 33px; padding-left: 2px; margin: -1px 10px 0 15px; background: #fff; border: solid #ccc; border-width: 0 1px 1px; color: var(--accent); font-weight: 700; }
  .scroll { display: flex; align-items: center; gap: 9px; flex: none; width: 42%; margin-left: auto; padding-right: 34px; }
  .track { display: flex; flex: 1; height: 21px; background: #dedede; }
  .track button { width: 30px; }
  .track button:last-child { width: 46px; padding-left: 18px; }
  .thumb { flex: 1; border: 1px solid #aaa; border-radius: 11px; background: #f4f4f4; }
`, `
  <div class="nav">${['first', 'prev', 'next', 'last'].map(n => `<button aria-label="${n}"><ui-icon name="${n}"></ui-icon></button>`).join('')}</div>
  <button class="tab">Sheet1</button>
  <button aria-label="新建工作表"><ui-icon name="plus"></ui-icon></button>
  <div class="scroll">
    <ui-icon name="gripV"></ui-icon>
    <div class="track"><button aria-label="向左"><ui-icon name="triLeft"></ui-icon></button><div class="thumb"></div><button aria-label="向右"><ui-icon name="triRight"></ui-icon></button></div>
    <ui-icon name="gripV"></ui-icon>
  </div>
`);

const SIDE = ['pointer', 'shapes', 'artText', 'tableSide', 'widgets', 'chart', 'sliders', 'swap', 'gallery', 'share', 'archive', 'picture', 'docer', 'history'];
component('side-panel', `
  :host { display: flex; flex-direction: column; align-items: center; flex: none; width: 66px; padding-top: 14px; overflow: hidden; }
  .list { display: flex; flex-direction: column; flex: 1; margin-top: 16px; min-height: 0; }
  .list button { width: 48px; height: 54px; }
  .off { color: #d0d0d0; }
  .down { width: 100%; height: 18px; background: #b7bac3; }
`, `
  <ui-icon name="grip"></ui-icon>
  <div class="list">${SIDE.map(n => `<button aria-label="${n}" class="${n === 'sliders' || n === 'swap' ? 'off' : ''}"><ui-icon name="${n}"></ui-icon></button>`).join('')}</div>
  <button class="down" aria-label="向下滚动"><ui-icon name="chevSmall"></ui-icon></button>
`);

component('status-bar', `
  :host { display: flex; align-items: center; position: relative; height: 43px; flex: none; background: var(--panel); border-bottom: 1px solid #000; color: #555; }
  .macro { width: 58px; padding-right: 2px; color: #333; }
  .line { width: 1px; height: 36px; background: #ddd; }
  .guard { gap: 5px; padding: 0 17px; }
  .sum { display: flex; gap: 10px; margin-left: 167px; font-size: 19px; }
  .right { display: flex; align-items: center; margin-left: auto; padding-right: 24px; color: #333; }
  .view { width: 36px; height: 36px; border-radius: 6px; }
  .on { background: var(--pressed); }
  .zoom { margin: 0 10px 0 12px; font-size: 20px; color: #555; gap: 4px; }
  input { width: 206px; height: 20px; margin: 0 17px; background: linear-gradient(#888, #888) center / 100% 1px no-repeat; }
  input::-webkit-slider-thumb { appearance: none; width: 19px; height: 19px; border: 2px solid #444; border-radius: 50%; background: #f4f4f4; }
  .mark { position: absolute; right: 10px; bottom: 5px; font: 400 16px/22px "Liberation Sans", sans-serif; color: #fff; text-shadow: 1px 1px 1px #aaa; opacity: 0.8; }
`, `
  <button class="macro" aria-label="录制宏"><ui-icon name="macro"></ui-icon></button><span class="line"></span>
  <button class="guard"><ui-icon name="shield"></ui-icon>文档未保护</button><span class="line"></span>
  <div class="sum"><span>求和=2100</span><span>平均值=350</span><span>计数=6</span></div>
  <div class="right">
    <button class="view" aria-label="全屏"><ui-icon name="expand"></ui-icon></button>
    <button class="view on" aria-label="普通视图" style="margin: 0 3px"><ui-icon name="gridView"></ui-icon></button>
    <button class="view" aria-label="分页预览"><ui-icon name="pageView"></ui-icon></button>
    <button aria-label="阅读布局" style="margin: 0 4px 0 8px"><ui-icon name="breakView"></ui-icon><ui-icon name="arrow"></ui-icon></button>
    <button class="view on" aria-label="护眼模式" style="margin-right: 8px"><ui-icon name="eye"></ui-icon></button>
    <span class="line"></span>
    <button class="zoom">100%<ui-icon name="arrow"></ui-icon></button>
    <button aria-label="缩小"><ui-icon name="minus"></ui-icon></button>
    <input type="range" min="0" max="100" value="49" aria-label="缩放">
    <button aria-label="放大"><ui-icon name="plusThick"></ui-icon></button>
  </div>
  <span class="mark">https://blog.csdn.net/haoranhaoshi</span>
`);

component('app-window', `
  :host { display: flex; flex-direction: column; height: 100vh; background: var(--bar); }
  .work { display: flex; flex: 1; min-height: 0; }
  .main { display: flex; flex-direction: column; flex: 1; min-width: 0; }
  .sheet { display: flex; flex: 1; min-height: 0; }
`, `
  <title-bar></title-bar>
  <menu-bar></menu-bar>
  <ribbon-bar></ribbon-bar>
  <div class="work">
    <div class="main">
      <formula-bar></formula-bar>
      <div class="sheet"><sheet-grid></sheet-grid><scroll-v></scroll-v></div>
      <sheet-tabs></sheet-tabs>
    </div>
    <side-panel></side-panel>
  </div>
  <status-bar></status-bar>
`);
</script>
</body>
</html>
